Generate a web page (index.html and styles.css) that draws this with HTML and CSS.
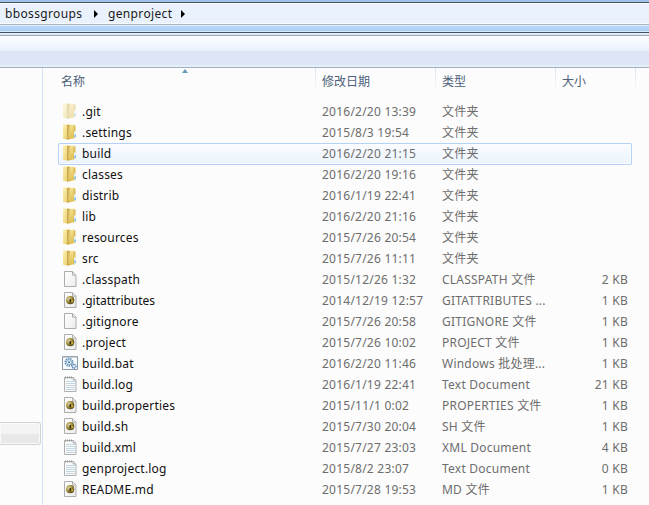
FILE: index.html
```html
<!DOCTYPE html>
<html lang="zh-CN">
<head>
<meta charset="utf-8">
<title>genproject</title>
<link rel="stylesheet" href="styles.css">
</head>
<body>
<svg class="defs" width="0" height="0" aria-hidden="true">
<defs>
<linearGradient id="gf" x1="0" x2="1" y1="0" y2="1"><stop offset="0" stop-color="#fdf1b4"/><stop offset="1" stop-color="#e6ca66"/></linearGradient>
<linearGradient id="gb" x1="0" x2="0" y1="0" y2="1"><stop offset="0" stop-color="#f3e08f"/><stop offset="1" stop-color="#e0bd4c"/></linearGradient>
<linearGradient id="gp" x1="0" x2="1" y1="0" y2="1"><stop offset="0" stop-color="#fff"/><stop offset="1" stop-color="#ececec"/></linearGradient>
<radialGradient id="go" cx=".35" cy=".35" r=".7"><stop offset="0" stop-color="#d6d6c8"/><stop offset=".45" stop-color="#b29a3d"/><stop offset="1" stop-color="#4c441d"/></radialGradient>
<symbol id="folder" viewBox="0 0 16 16">
<path d="M6 .8h6.5V14L7 15.5z" fill="url(#gb)"/>
<path d="M11.5 1.5h2V14l-2 .5z" fill="#dcbc58"/>
<path d="M1 .8 5.5.2l1.5 1V15l-1.5.8L1 14.8z" fill="url(#gf)"/>
<path d="M5 1.5 6.2.6 8 1.6v12.6L6 15.8l-1-.8z" fill="#c9a94b"/>
<path d="M6.5 2.5 8 1.8v11.7l-1.5 1z" fill="#e3c976"/>
<path d="M12 7.5h2v6h-2z" fill="#eaf4fa"/><path d="M12.5 10.5h1.2v2.6h-1.2z" fill="#58a9dc"/>
</symbol>
<symbol id="page" viewBox="0 0 16 16">
<path d="M2.5.5h8l3.5 3.5v11.5H2.5z" fill="url(#gp)" stroke="#adadad"/>
<path d="M10.5.8v3.4h3.3" fill="#eee" stroke="#adadad"/>
</symbol>
<symbol id="lock" viewBox="0 0 16 16">
<use href="#page"/><circle cx="8.2" cy="8.2" r="4.1" fill="url(#go)"/>
<path d="M7.5 7.2h1.6v3H7.5z" fill="#302c16"/><path d="M9.4 8.5h1.8v1.7H9.4z" fill="#dfb72c"/>
</symbol>
<symbol id="note" viewBox="0 0 16 16">
<path d="M2.5 1.5h9.2L14 4v11.5H2.5z" fill="#fafafa" stroke="#b0b0b0"/>
<path d="M3 1.5h8" stroke="#919191" stroke-width="2" stroke-dasharray="1 1"/>
<path d="M11.2 1v3H14" fill="#eee" stroke="#a6a6a6"/>
<path d="M4 5.5h9M4 7.5h9M4 9.5h9M4 11.5h9M4 13.5h9" stroke="#c3d6e4"/>
</symbol>
<symbol id="gear" viewBox="0 0 16 16">
<path d="M.5 1.5h15v13H.5z" fill="#f8fbfd" stroke="#8c9aa7"/><path d="M1 2.2h14" stroke="#b5c0c9"/>
<circle cx="7" cy="7.2" r="3.7" fill="none" stroke="#5282ac" stroke-width="1.7" stroke-dasharray="1.3 1"/>
<circle cx="7" cy="7.2" r="2.6" fill="#e1edf6" stroke="#6d9abf" stroke-width=".8"/><circle cx="7" cy="7.2" r="1" fill="#4d799f"/>
<circle cx="12" cy="11.3" r="1.9" fill="#e9f3fa" stroke="#4c7dab" stroke-width="1.4" stroke-dasharray="1.1 .6"/>
</symbol>
</defs>
</svg>
<div class="window">
<div class="frame-top"></div>
<nav class="address"><span class="crumb first">bbossgroups</span><i class="arrow"></i><span class="crumb second">genproject</span><i class="arrow"></i></nav>
<div class="glass"></div>
<div class="toolbar"></div>
<div class="content">
<aside class="sidebar"><div class="tree-selection"></div></aside>
<main class="files">
<div class="row header"><span class="name">名称<i class="sort"></i></span><span class="date">修改日期</span><span class="type">类型</span><span class="size">大小</span></div>
<div class="row"><span class="name"><svg class="faded"><use href="#folder"/></svg>.git</span><span class="date">2016/2/20 13:39</span><span class="type">文件夹</span><span class="size"></span></div>
<div class="row"><span class="name"><svg><use href="#folder"/></svg>.settings</span><span class="date">2015/8/3 19:54</span><span class="type">文件夹</span><span class="size"></span></div>
<div class="row hover"><span class="name"><svg><use href="#folder"/></svg>build</span><span class="date">2016/2/20 21:15</span><span class="type">文件夹</span><span class="size"></span></div>
<div class="row"><span class="name"><svg><use href="#folder"/></svg>classes</span><span class="date">2016/2/20 19:16</span><span class="type">文件夹</span><span class="size"></span></div>
<div class="row"><span class="name"><svg><use href="#folder"/></svg>distrib</span><span class="date">2016/1/19 22:41</span><span class="type">文件夹</span><span class="size"></span></div>
<div class="row"><span class="name"><svg><use href="#folder"/></svg>lib</span><span class="date">2016/2/20 21:16</span><span class="type">文件夹</span><span class="size"></span></div>
<div class="row"><span class="name"><svg><use href="#folder"/></svg>resources</span><span class="date">2015/7/26 20:54</span><span class="type">文件夹</span><span class="size"></span></div>
<div class="row"><span class="name"><svg><use href="#folder"/></svg>src</span><span class="date">2015/7/26 11:11</span><span class="type">文件夹</span><span class="size"></span></div>
<div class="row"><span class="name"><svg><use href="#page"/></svg>.classpath</span><span class="date">2015/12/26 1:32</span><span class="type">CLASSPATH 文件</span><span class="size">2 KB</span></div>
<div class="row"><span class="name tight"><svg><use href="#lock"/></svg>.gitattributes</span><span class="date">2014/12/19 12:57</span><span class="type">GITATTRIBUTES ...</span><span class="size">1 KB</span></div>
<div class="row"><span class="name"><svg><use href="#page"/></svg>.gitignore</span><span class="date">2015/7/26 20:58</span><span class="type">GITIGNORE 文件</span><span class="size">1 KB</span></div>
<div class="row"><span class="name"><svg><use href="#lock"/></svg>.project</span><span class="date">2015/7/26 10:02</span><span class="type">PROJECT 文件</span><span class="size">1 KB</span></div>
<div class="row"><span class="name"><svg><use href="#gear"/></svg>build.bat</span><span class="date">2016/2/20 11:46</span><span class="type">Windows 批处理...</span><span class="size">1 KB</span></div>
<div class="row"><span class="name"><svg><use href="#note"/></svg>build.log</span><span class="date">2016/1/19 22:41</span><span class="type">Text Document</span><span class="size">21 KB</span></div>
<div class="row"><span class="name"><svg><use href="#lock"/></svg>build.properties</span><span class="date">2015/11/1 0:02</span><span class="type">PROPERTIES 文件</span><span class="size">1 KB</span></div>
<div class="row"><span class="name"><svg><use href="#lock"/></svg>build.sh</span><span class="date">2015/7/30 20:04</span><span class="type">SH 文件</span><span class="size">1 KB</span></div>
<div class="row"><span class="name"><svg><use href="#note"/></svg>build.xml</span><span class="date">2015/7/27 23:03</span><span class="type">XML Document</span><span class="size">4 KB</span></div>
<div class="row"><span class="name"><svg><use href="#note"/></svg>genproject.log</span><span class="date">2015/8/2 23:07</span><span class="type">Text Document</span><span class="size">0 KB</span></div>
<div class="row"><span class="name"><svg><use href="#lock"/></svg>README.md</span><span class="date">2015/7/28 19:53</span><span class="type">MD 文件</span><span class="size">1 KB</span></div>
</main>
</div>
</div>
</body>
</html>
```
FILE: styles.css
```css
* { box-sizing: border-box; }
body { margin: 0; overflow: hidden; font: 12px/21px "Noto Sans", "Noto Sans CJK SC", sans-serif; color: #6d6d6d; background: #fcfcfc; }
.defs { position: absolute; }
.window { width: 649px; height: 505px; display: flex; flex-direction: column; overflow: hidden; }
.frame-top { height: 3px; flex: none; background: linear-gradient(#9fc3e8 0 2px, #465565 2px); }
.address { height: 22px; flex: none; display: flex; align-items: center; padding: 0 0 1px 5px; color: #1b1b1b; background: linear-gradient(#fff 0 1px, #e9f1fc 1px 20px, #f8fbff 20px 21px, #a7b4c3 21px); }
.crumb { flex: none; letter-spacing: .35px; }
.first { width: 89px; }
.second { width: 73px; }
.arrow { border: 4px solid transparent; border-left: 4px solid #000; border-right: 0; margin: 1px 10px 0 0; }
.glass { height: 11px; flex: none; background: linear-gradient(#e4f0fb 0 1px, #b6d5f6 1px 3px, #a9cef3 6px, #dceafa 6px 7px, #3f5268 7px 8px, #e1e9f4 8px 10px, #9ba6b7 10px); }
.toolbar { height: 32px; flex: none; background: linear-gradient(#fcfeff 0, #e8f1fb 15px, #dde6f4 15px 29px, #e5effa 29px 31px, #a2aec2 31px); }
.content { flex: 1; display: flex; min-height: 0; }
.sidebar { width: 43px; flex: none; border-right: 1px solid #d5e2f5; padding-top: 354px; }
.tree-selection { width: 41px; height: 23px; border: 1px solid #d3d3d3; border-left: 0; border-radius: 0 3px 3px 0; box-shadow: inset 0 0 0 1px #fafafa; background: linear-gradient(#f4f4f4 0 11px, #e8e8e8 11px); }
.files { flex: 1; padding-left: 15px; }
.row { width: 574px; height: 21px; display: grid; grid-template-columns: 257px 120px 120px 77px; align-items: center; white-space: nowrap; border-radius: 2px; letter-spacing: .23px; }
.name { display: flex; align-items: center; height: 21px; color: #101010; padding-left: 4px; letter-spacing: .2px; }
.tight { letter-spacing: 0; }
.name svg { width: 16px; height: 16px; margin: 0 4px 1px 0; flex: none; }
.faded { opacity: .45; }
.date, .type { padding-left: 7px; }
.size { text-align: right; padding-right: 4px; }
.hover { height: 22px; margin-bottom: -1px; align-items: start; box-shadow: inset 0 0 0 1px #b4d2f5, inset 0 0 0 2px #fbfdff; background: linear-gradient(#fbfcfe, #eaf3fd); }
.header { width: 578px; height: 20px; margin-bottom: 13px; grid-template-columns: 258px 120px 120px 80px; color: #4c607a; letter-spacing: 0; align-items: start; line-height: 27px; }
.header span { height: 22px; border-style: solid; border-width: 0 1px 0 0; border-image: linear-gradient(#d8e4f0, #edf2f8 60%, #fcfcfc) 1; }
.header .name { display: block; color: inherit; padding-left: 3px; letter-spacing: 0; position: relative; }
.header .date, .header .type { padding-left: 6px; }
.header .size { text-align: left; padding-left: 6px; }
.sort { position: absolute; left: 124px; top: 1px; border: 3.5px solid transparent; border-bottom: 4px solid #639bb8; border-top: 0; }
```
